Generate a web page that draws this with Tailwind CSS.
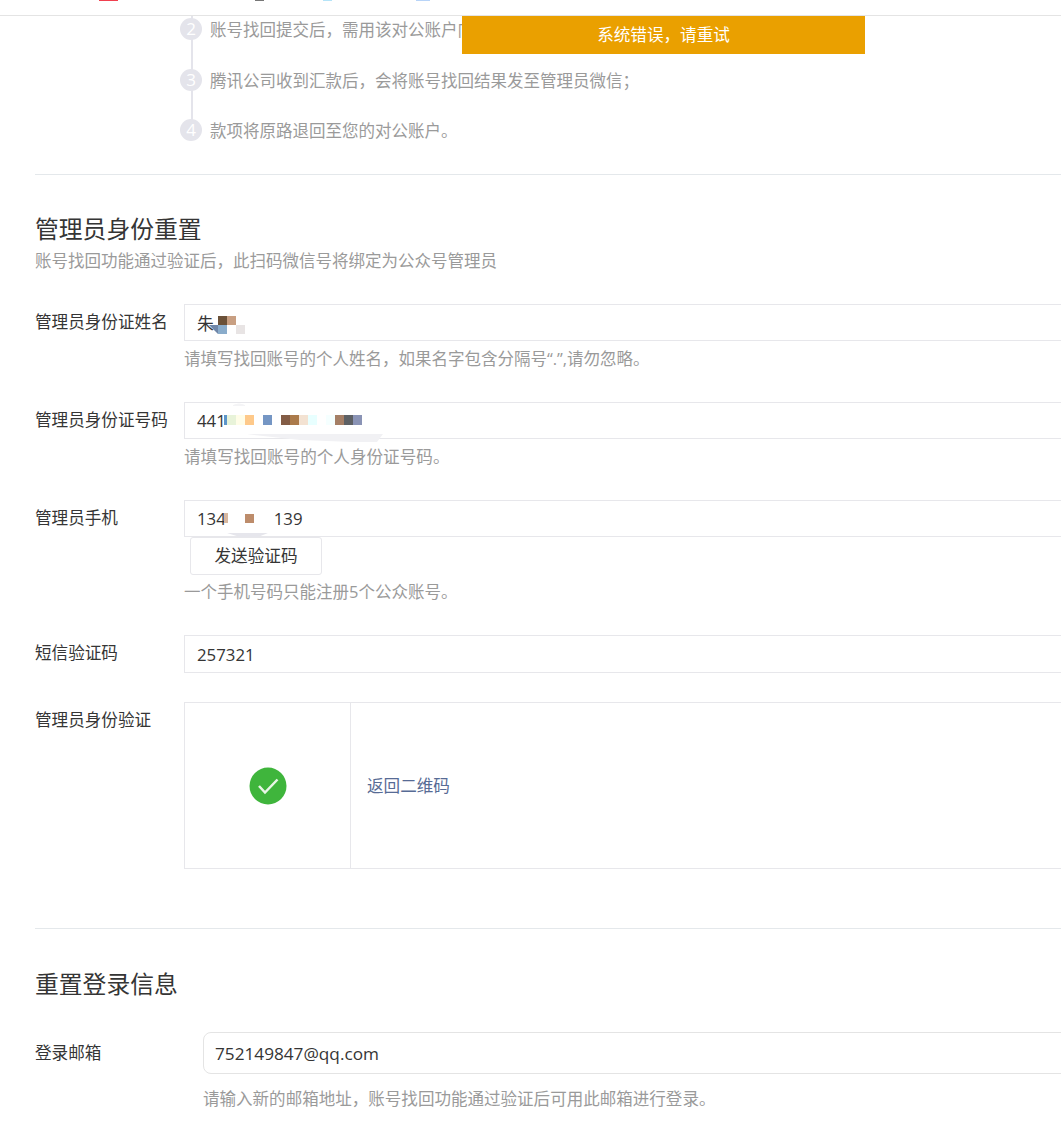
<!DOCTYPE html>
<html lang="zh-CN">
<head>
<meta charset="UTF-8">
<title>账号找回</title>
<script src="https://cdn.jsdelivr.net/npm/@tailwindcss/browser@4"></script>
</head>
<body class="bg-white">
<div class="relative h-screen overflow-hidden font-['Open_Sans','Noto_Sans_CJK_SC',sans-serif] text-[16.6px] text-[#353535]">

  <!-- top nav, scrolled away -->
  <div class="relative h-[16px] border-b border-[#e4e4e4]">
    <div class="absolute left-[99px] top-0 h-[1px] w-[19px] bg-[#f0404f]"></div>
    <div class="absolute left-[255px] top-0 h-[1px] w-[9px] bg-[#777]"></div>
    <div class="absolute left-[323px] top-0 h-[1px] w-[9px] bg-[#b5e4f8]"></div>
    <div class="absolute left-[416px] top-0 h-[1px] w-[14px] bg-[#b8d4f8]"></div>
  </div>

  <!-- toast -->
  <div class="absolute left-[462px] top-[16px] z-10 flex h-[38px] w-[403px] items-center justify-center bg-[#eaa000] pt-[1px] text-white">系统错误，请重试</div>

  <!-- steps -->
  <div class="pl-[180px]">
    <div class="relative flex h-[50px] items-start">
      <div class="absolute left-[11px] top-0 h-[60px] w-[2px] bg-[#e4e4eb]"></div>
      <span class="relative mt-[2px] flex h-[22px] w-[22px] items-center justify-center rounded-full bg-[#e4e4eb] text-[17px] text-white">2</span>
      <p class="ml-[8px] mt-[2px] text-[16.5px] leading-[24px] text-[#9a9a9a]">账号找回提交后，需用该对公账户向指定账户汇款；</p>
    </div>
    <div class="relative flex h-[50px] items-start">
      <div class="absolute left-[11px] top-[10px] h-[50px] w-[2px] bg-[#e4e4eb]"></div>
      <span class="relative mt-[3px] flex h-[22px] w-[22px] items-center justify-center rounded-full bg-[#e4e4eb] text-[17px] text-white">3</span>
      <p class="ml-[8px] mt-[3px] text-[16.5px] leading-[24px] text-[#9a9a9a]">腾讯公司收到汇款后，会将账号找回结果发至管理员微信；</p>
    </div>
    <div class="relative flex h-[50px] items-start">
      <span class="relative mt-[3px] flex h-[22px] w-[22px] items-center justify-center rounded-full bg-[#e4e4eb] text-[17px] text-white">4</span>
      <p class="ml-[8px] mt-[3px] text-[16.5px] leading-[24px] text-[#9a9a9a]">款项将原路退回至您的对公账户。</p>
    </div>
  </div>

  <div class="ml-[35px] mt-[8px] border-t border-[#e4e8eb]"></div>

  <!-- admin identity -->
  <section class="pl-[35px]">
    <h2 class="mt-[36px] text-[23.8px] leading-[37px] font-normal">管理员身份重置</h2>
    <p class="text-[16.5px] leading-[26px] text-[#9a9a9a]">账号找回功能通过验证后，此扫码微信号将绑定为公众号管理员</p>

    <div class="mt-[30px] flex">
      <label class="w-[149px] shrink-0 pt-[4px] leading-[28px]">管理员身份证姓名</label>
      <div>
        <div class="relative w-[1100px]">
          <input class="h-[37px] w-full border border-[#e7e7eb] px-[12px] text-[16.8px] text-[#353535] outline-none" value="朱">
          <div class="absolute left-[34px] top-[12px] h-[9px] w-[9px] bg-[#6b5138]"></div>
          <div class="absolute left-[43px] top-[12px] h-[9px] w-[9px] bg-[#c89f82]"></div>
          <div class="absolute left-[25px] top-[21px] h-0 w-0 border-t-[9px] border-l-[9px] border-t-[#6f86a8] border-l-transparent"></div>
          <div class="absolute left-[34px] top-[21px] h-[9px] w-[9px] bg-[#8aaccb]"></div>
          <div class="absolute left-[52px] top-[21px] h-[9px] w-[9px] bg-[#e8e4e4]"></div>
        </div>
        <p class="mt-[6px] text-[16.5px] leading-[24px] text-[#9a9a9a]">请填写找回账号的个人姓名，如果名字包含分隔号“.”,请勿忽略。</p>
      </div>
    </div>

    <div class="mt-[31px] flex">
      <label class="w-[149px] shrink-0 pt-[4px] leading-[28px]">管理员身份证号码</label>
      <div>
        <div class="relative w-[1100px]">
          <input class="h-[37px] w-full border border-[#e7e7eb] px-[12px] text-[16.8px] text-[#353535] outline-none" value="441">
          <svg class="absolute left-[40px] top-0" width="170" height="42" viewBox="0 0 170 42"><path d="M23 32 L159 32 L153 40 L129 40 L76 38 L30 33Z" fill="#f1f1f4"/><path d="M9 3 Q15 0 21 3 L21 4 L9 4Z" fill="#f4f4f6"/></svg>
          <div class="absolute left-[40px] top-[13px] h-[10px] w-[3px] bg-[#5d95c9]"></div>
          <div class="absolute left-[43px] top-[13px] h-[10px] w-[9px] bg-[#e8f3d9]"></div>
          <div class="absolute left-[52px] top-[13px] h-[10px] w-[9px] bg-[#fffde8]"></div>
          <div class="absolute left-[61px] top-[13px] h-[10px] w-[9px] bg-[#fec98a]"></div>
          <div class="absolute left-[79px] top-[13px] h-[10px] w-[9px] bg-[#7596c4]"></div>
          <div class="absolute left-[97px] top-[13px] h-[10px] w-[9px] bg-[#835c45]"></div>
          <div class="absolute left-[106px] top-[13px] h-[10px] w-[9px] bg-[#ab7a4a]"></div>
          <div class="absolute left-[115px] top-[13px] h-[10px] w-[9px] bg-[#f3e2d2]"></div>
          <div class="absolute left-[124px] top-[13px] h-[10px] w-[9px] bg-[#e8ffff]"></div>
          <div class="absolute left-[142px] top-[13px] h-[10px] w-[9px] bg-[#f5ffff]"></div>
          <div class="absolute left-[151px] top-[13px] h-[10px] w-[9px] bg-[#a57f66]"></div>
          <div class="absolute left-[160px] top-[13px] h-[10px] w-[9px] bg-[#5d6064]"></div>
          <div class="absolute left-[169px] top-[13px] h-[10px] w-[9px] bg-[#8a93b5]"></div>
        </div>
        <p class="mt-[6px] leading-[24px] text-[#9a9a9a]">请填写找回账号的个人身份证号码。</p>
      </div>
    </div>

    <div class="mt-[31px] flex">
      <label class="w-[149px] shrink-0 pt-[4px] leading-[28px]">管理员手机</label>
      <div>
        <div class="relative w-[1100px]">
          <input class="h-[37px] w-full border border-[#e7e7eb] px-[12px] text-[16.8px] text-[#353535] outline-none" value="134           139">
          <div class="absolute left-[40px] top-[13px] h-[10px] w-[4px] bg-[#d8b8a0]"></div>
          <div class="absolute left-[61px] top-[14px] h-[9px] w-[9px] bg-[#bd8c6b]"></div>
          <svg class="absolute left-[43px] top-[33px]" width="42" height="6" viewBox="0 0 42 6"><path d="M0 0 L41 0 L31 4 L13 4Z" fill="#e6e6ec"/></svg>
        </div>
        <button class="ml-[6px] block h-[38px] w-[132px] rounded-[3px] border border-[#e7e7eb] bg-white text-[#353535]">发送验证码</button>
        <p class="mt-[5px] text-[16.5px] leading-[24px] text-[#9a9a9a]">一个手机号码只能注册5个公众账号。</p>
      </div>
    </div>

    <div class="mt-[31px] flex">
      <label class="w-[149px] shrink-0 pt-[4px] leading-[28px]">短信验证码</label>
      <input class="h-[38px] w-[1100px] shrink-0 border border-[#e7e7eb] px-[12px] text-[16.8px] text-[#353535] outline-none" value="257321">
    </div>

    <div class="mt-[29px] flex">
      <label class="w-[149px] shrink-0 pt-[4px] leading-[28px]">管理员身份验证</label>
      <div class="flex h-[167px] w-[1100px] shrink-0 border border-[#e7e7eb]">
        <div class="flex w-[166px] items-center justify-center border-r border-[#e7e7eb]">
          <svg width="38" height="38" viewBox="0 0 38 38"><circle cx="19" cy="19" r="18.5" fill="#3fb53c"/><path d="M10 19 L16 25.5 L28.5 12.5" fill="none" stroke="#e8f6e6" stroke-width="2.5"/></svg>
        </div>
        <div class="flex items-center pl-[16px] pt-[2px]"><a href="#" class="text-[#576b95]">返回二维码</a></div>
      </div>
    </div>
  </section>

  <div class="ml-[35px] mt-[59px] border-t border-[#e4e8eb]"></div>

  <!-- login info -->
  <section class="pl-[35px]">
    <h2 class="mt-[37px] text-[23.8px] leading-[36px] font-normal">重置登录信息</h2>
    <div class="mt-[30px] flex">
      <label class="w-[168px] shrink-0 pt-[7px] leading-[28px]">登录邮箱</label>
      <div>
        <input class="h-[42px] w-[1000px] rounded-[8px] border border-[#e4e4e4] px-[11px] text-[17.2px] text-[#353535] outline-none" value="752149847@qq.com">
        <p class="mt-[13px] text-[16.55px] leading-[24px] text-[#9a9a9a]">请输入新的邮箱地址，账号找回功能通过验证后可用此邮箱进行登录。</p>
      </div>
    </div>
  </section>
</div>
</body>
</html>
